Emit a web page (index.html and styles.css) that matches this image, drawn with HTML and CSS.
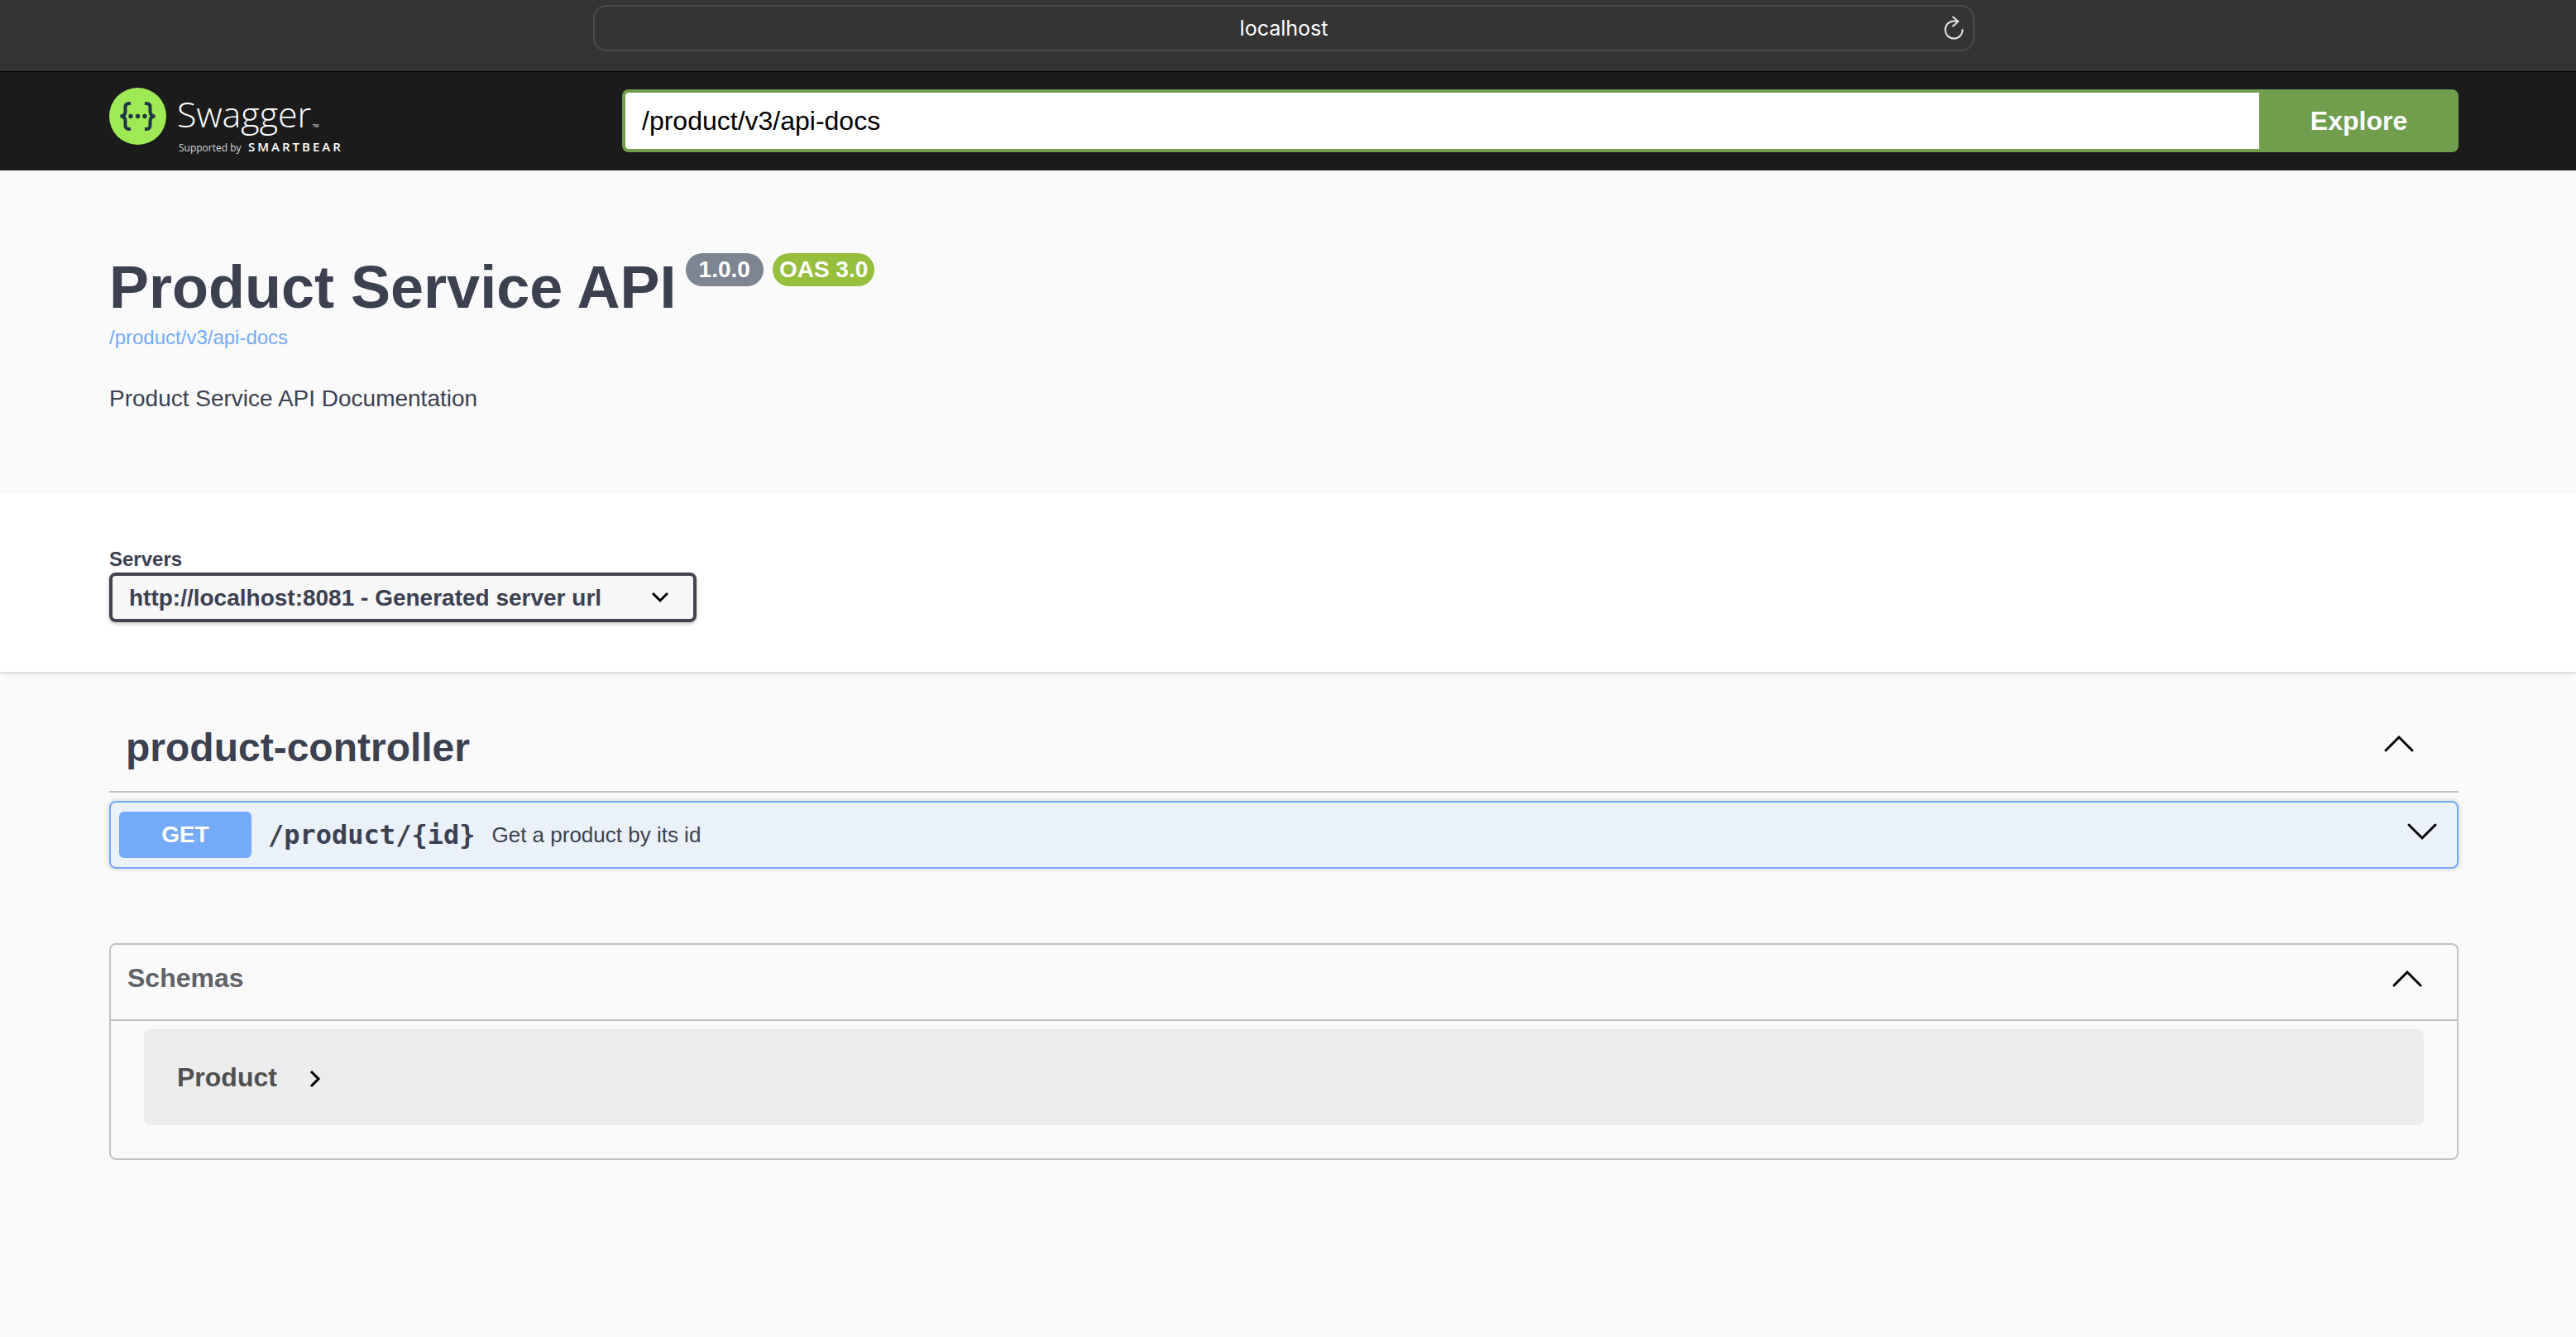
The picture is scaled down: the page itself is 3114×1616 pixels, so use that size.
FILE: index.html
```html
<!DOCTYPE html>
<html lang="en">
  <head>
    <meta charset="UTF-8">
    <title>Swagger UI</title>
    <link rel="stylesheet" href="styles.css">
  </head>
  <body>
    <div class="browser-bar">
      <div class="address">
        <span>localhost</span>
        <button class="reload" aria-label="Reload">
          <svg width="26" height="30" viewBox="0 0 26 30"><path d="M23.500 17A10.500 10.500 0 1 1 13 6.500h5M12 1.500L18 7 12 12.500" /></svg>
        </button>
      </div>
    </div>

    <header class="topbar">
      <div class="wrapper topbar-wrapper">
        <a class="logo" href="#" aria-label="Swagger">
          <svg width="290" height="80" viewBox="0 0 290 80">
            <circle cx="34.500" cy="34.500" r="34.500" fill="#9fe955" />
            <g fill="none" stroke="#1f3446" stroke-width="4">
              <path d="M26 19h-2q-4.500 0-4.500 4.500v5q0 6-6 6q6 0 6 6v5q0 4.500 4.500 4.500h2" />
              <path d="M43 19h2q4.500 0 4.500 4.500v5q0 6 6 6q-6 0-6 6v5q0 4.500-4.500 4.500h-2" />
            </g>
            <g fill="#1f3446">
              <circle cx="26" cy="34.500" r="2.700" />
              <circle cx="34.500" cy="34.500" r="2.700" />
              <circle cx="43" cy="34.500" r="2.700" />
            </g>
            <text class="logo-name" x="82" y="48">Swagger</text>
            <text class="logo-tm" x="246" y="48">TM</text>
            <text class="logo-by" x="84" y="77">Supported by</text>
            <text class="logo-brand" x="168" y="77">SMARTBEAR</text>
          </svg>
        </a>
        <form class="download-url">
          <input type="text" aria-label="API definition url" value="/product/v3/api-docs">
          <button type="button">Explore</button>
        </form>
      </div>
    </header>

    <section class="info wrapper">
      <div class="title-row">
        <h1>Product Service API</h1>
        <span class="badge">1.0.0</span>
        <span class="badge badge-oas">OAS 3.0</span>
      </div>
      <a class="docs-link" href="#">/product/v3/api-docs</a>
      <p>Product Service API Documentation</p>
    </section>

    <section class="scheme">
      <div class="wrapper">
        <label for="servers">Servers</label>
        <div class="select-box">
          <select id="servers">
            <option>http://localhost:8081 - Generated server url</option>
          </select>
          <svg class="select-arrow" width="24" height="16" viewBox="0 0 24 16"><path d="M3 3l9 9 9-9" /></svg>
        </div>
      </div>
    </section>

    <main class="wrapper">
      <div class="tag">
        <h2>product-controller</h2>
        <button class="toggle" aria-label="Collapse operation">
          <svg width="40" height="24" viewBox="0 0 40 24"><path d="M4 20L20 4l16 16" /></svg>
        </button>
      </div>

      <div class="opblock">
        <button class="method">GET</button>
        <a class="path" href="#">/product/{id}</a>
        <span class="summary">Get a product by its id</span>
        <button class="toggle" aria-label="Expand operation">
          <svg width="40" height="24" viewBox="0 0 40 24"><path d="M4 4l16 16L36 4" /></svg>
        </button>
      </div>

      <section class="models">
        <div class="models-header">
          <h4>Schemas</h4>
          <button class="toggle" aria-label="Collapse schemas">
            <svg width="40" height="24" viewBox="0 0 40 24"><path d="M4 20L20 4l16 16" /></svg>
          </button>
        </div>
        <div class="model">
          <span>Product</span>
          <button class="expand" aria-label="Expand Product">
            <svg width="16" height="24" viewBox="0 0 16 24"><path d="M3 3l9 9-9 9" /></svg>
          </button>
        </div>
      </section>
    </main>
  </body>
</html>
```
FILE: styles.css
```css
* {
    box-sizing: border-box;
}

body {
    margin: 0;
    background-color: #fafafa;
    color: #3b4151;
    font-family: "Liberation Sans", Arial, sans-serif;
}

h1, h2, h4, p {
    margin: 0;
}

a {
    color: inherit;
    text-decoration: none;
}

button {
    padding: 0;
    border: none;
    background: none;
    font-family: inherit;
    cursor: pointer;
}

svg {
    display: block;
}

.wrapper {
    padding: 0 142px 0 132px;
}

/* browser chrome */
.browser-bar {
    display: flex;
    justify-content: center;
    padding: 6px 10px 24px 0;
    background-color: #343434;
    border-bottom: 1px solid #000;
}

.address {
    display: flex;
    align-items: center;
    justify-content: center;
    position: relative;
    width: 53.8%;
    height: 56px;
    border: 2px solid #4c4c4d;
    border-radius: 16px;
    color: #fff;
    font: 25px Inter, "Liberation Sans", sans-serif;
}

.reload {
    position: absolute;
    right: 10px;
}

.reload path {
    fill: none;
    stroke: #e4e4e4;
    stroke-width: 2;
    stroke-linecap: round;
}

/* top bar */
.topbar {
    background-color: #1b1b1b;
}

.topbar-wrapper {
    display: flex;
    align-items: center;
    height: 119px;
    padding-bottom: 1px;
}

.logo {
    flex: 0 0 620px;
}

.logo-name {
    fill: #fff;
    font: 300 43px "Open Sans", sans-serif;
}

.logo-tm {
    fill: #fff;
    font: 5px "Open Sans", sans-serif;
}

.logo-by {
    fill: #d5d8dc;
    font: 12px "Open Sans", sans-serif;
}

.logo-brand {
    fill: #fff;
    font: 600 15px "Open Sans", sans-serif;
    letter-spacing: 3px;
}

.download-url {
    display: flex;
    flex: 1;
    height: 76px;
}

.download-url input {
    flex: 1;
    padding: 0 20px;
    border: 4px solid #709e4d;
    border-right: none;
    border-radius: 8px 0 0 8px;
    background-color: #fff;
    color: #000;
    font: 32px "Liberation Sans", Arial, sans-serif;
    outline: none;
}

.download-url button {
    width: 241px;
    border-radius: 0 8px 8px 0;
    background-color: #709e4d;
    color: #fff;
    font-size: 32px;
    font-weight: bold;
}

/* info */
.info {
    padding-top: 100px;
    padding-bottom: 96px;
}

.title-row {
    display: flex;
    align-items: flex-start;
    gap: 11px;
}

.info h1 {
    font-size: 72px;
    line-height: 82px;
}

.badge {
    padding: 0 16px;
    border-radius: 20px;
    background-color: #7d8492;
    color: #fff;
    font-size: 28px;
    font-weight: bold;
    line-height: 40px;
}

.badge-oas {
    padding: 0 8px;
    background-color: #95bf3d;
}

.docs-link {
    display: block;
    color: #74aaf7;
    font-size: 24px;
    line-height: 40px;
}

.info p {
    margin-top: 36px;
    font-size: 28px;
    line-height: 36px;
}

/* servers */
.scheme {
    padding: 64px 0 60px;
    background-color: #fff;
    box-shadow: 0 2px 4px rgba(0, 0, 0, 0.15);
}

.scheme label {
    display: block;
    font-size: 24px;
    font-weight: bold;
    line-height: 32px;
}

.select-box {
    display: flex;
    align-items: center;
    position: relative;
    width: 710px;
}

.select-box select {
    appearance: none;
    width: 100%;
    height: 60px;
    padding: 0 20px;
    border: 4px solid #41444e;
    border-radius: 8px;
    background-color: #f7f7f7;
    box-shadow: 0 2px 4px rgba(0, 0, 0, 0.25);
    color: #3b4151;
    font: bold 28px "Liberation Sans", Arial, sans-serif;
}

.select-arrow {
    position: absolute;
    right: 32px;
    pointer-events: none;
}

.select-arrow path,
.expand path {
    fill: none;
    stroke: #000;
    stroke-width: 3;
}

/* operations */
.tag {
    display: flex;
    align-items: center;
    justify-content: space-between;
    margin-top: 30px;
    padding: 17px 52px 17px 20px;
    border-bottom: 2px solid #c1c2c7;
}

.tag h2 {
    padding-top: 10px;
    font-size: 48px;
    line-height: 70px;
}

.toggle path {
    fill: none;
    stroke: #000;
    stroke-width: 3;
    stroke-linecap: round;
}

.opblock .toggle,
.models .toggle {
    padding-bottom: 8px;
}

.opblock {
    display: flex;
    align-items: center;
    margin-top: 10px;
    padding: 11px 22px 11px 10px;
    border: 2px solid #74aaf7;
    border-radius: 8px;
    background-color: #ebf1f9;
    box-shadow: 0 0 6px rgba(0, 0, 0, 0.19);
}

.method {
    width: 160px;
    height: 56px;
    border-radius: 6px;
    background-color: #74aaf7;
    color: #fff;
    font-size: 28px;
    font-weight: bold;
}

.path {
    margin: 0 20px;
    font: bold 32px "DejaVu Sans Mono", monospace;
}

.summary {
    flex: 1;
    font-size: 26px;
}

/* schemas */
.models {
    margin-top: 90px;
    padding-bottom: 40px;
    border: 2px solid #c1c2c7;
    border-radius: 8px;
}

.models-header {
    display: flex;
    align-items: center;
    justify-content: space-between;
    padding: 10px 40px 10px 20px;
    border-bottom: 2px solid #c1c2c7;
    color: #606269;
}

.models-header h4 {
    padding-bottom: 10px;
    font-size: 32px;
    line-height: 60px;
}

.model {
    display: flex;
    align-items: center;
    gap: 38px;
    height: 116px;
    margin: 10px 40px 0;
    padding: 0 40px;
    border-radius: 8px;
    background-color: #ececec;
    color: #505050;
    font-size: 32px;
    font-weight: bold;
}

.expand {
    padding-top: 4px;
}
```
